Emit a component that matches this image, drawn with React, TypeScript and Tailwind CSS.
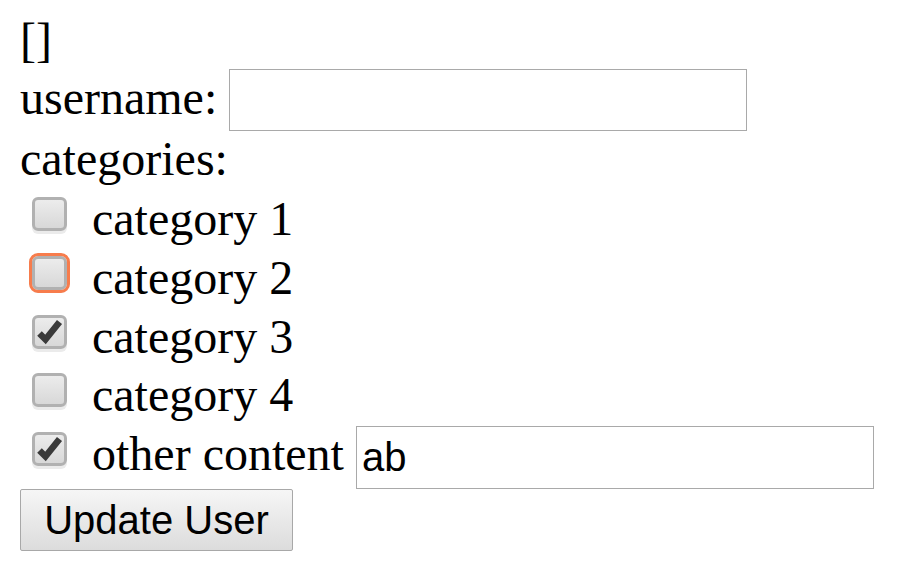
import React from "react";

function Check() {
  return (
    <svg viewBox="0 0 29 28" className="block h-full w-full">
      <path d="M4.5 15.5 L10.5 21.5 L24.5 4" fill="none" stroke="#3a3a3a" strokeWidth="6.5" strokeLinejoin="miter" strokeLinecap="butt" />
    </svg>
  );
}

function Box({ checked, focus }: { checked?: boolean; focus?: boolean }) {
  return (
    <div
      className={
        focus
          ? "mt-[4px] ml-[12px] h-[34px] w-[35px] shrink-0 rounded-[6px] border-[3px] border-[#b1b1b1] bg-linear-to-b from-[#ececec] to-[#d8d8d8] shadow-[0_3px_0_0_#ebebeb] outline-[3px] outline-solid outline-[#f77c4c] outline-offset-0"
          : "mt-[4px] ml-[12px] h-[34px] w-[35px] shrink-0 rounded-[6px] border-[3px] border-[#b1b1b1] bg-linear-to-b from-[#ececec] to-[#d8d8d8] shadow-[0_3px_0_0_#ebebeb]"
      }
    >
      {checked ? <Check /> : null}
    </div>
  );
}

export default function App() {
  const cats = [
    { label: "category 1", checked: false, focus: false },
    { label: "category 2", checked: false, focus: true },
    { label: "category 3", checked: true, focus: false },
    { label: "category 4", checked: false, focus: false },
  ];
  return (
    <div className="min-h-[562px] w-[900px] bg-white pl-[20px] text-black font-['Liberation_Serif','Times_New_Roman',serif] text-[48px]">
      <div className="h-[69px] pt-[16px] leading-[48px]">[]</div>
      <div className="flex h-[62px] items-baseline">
        <span className="mr-[12px] leading-[48px]">username:</span>
        <input
          type="text"
          className="h-[62px] w-[518px] border border-[#a9a9a9] bg-white px-[5px] font-['Liberation_Sans',Arial,sans-serif] text-[40px] text-black outline-none"
          defaultValue=""
        />
      </div>
      <div className="h-[62px] pt-[4px] leading-[48px]">categories:</div>
      {cats.map((c) => (
        <div key={c.label} className="flex h-[58.75px] items-start">
          <Box checked={c.checked} focus={c.focus} />
          <span className="ml-[25px] mt-[2px] leading-[48px]">{c.label}</span>
        </div>
      ))}
      <div className="flex h-[61px] items-start">
        <Box checked />
        <span className="ml-[25px] mt-[2px] leading-[48px]">other content</span>
        <input
          type="text"
          className="mt-[-2px] ml-[12px] h-[63px] w-[518px] border border-[#a9a9a9] bg-white px-[5px] font-['Liberation_Sans',Arial,sans-serif] text-[40px] text-black outline-none"
          defaultValue="ab"
        />
      </div>
      <button
        type="button"
        className="flex h-[62px] w-[273px] items-center justify-center rounded-[2px] border border-[#a8a8a8] bg-linear-to-b from-[#f6f6f6] to-[#dcdcdc] font-['Liberation_Sans',Arial,sans-serif] text-[40px] leading-none text-black"
      >
        Update User
      </button>
    </div>
  );
}
